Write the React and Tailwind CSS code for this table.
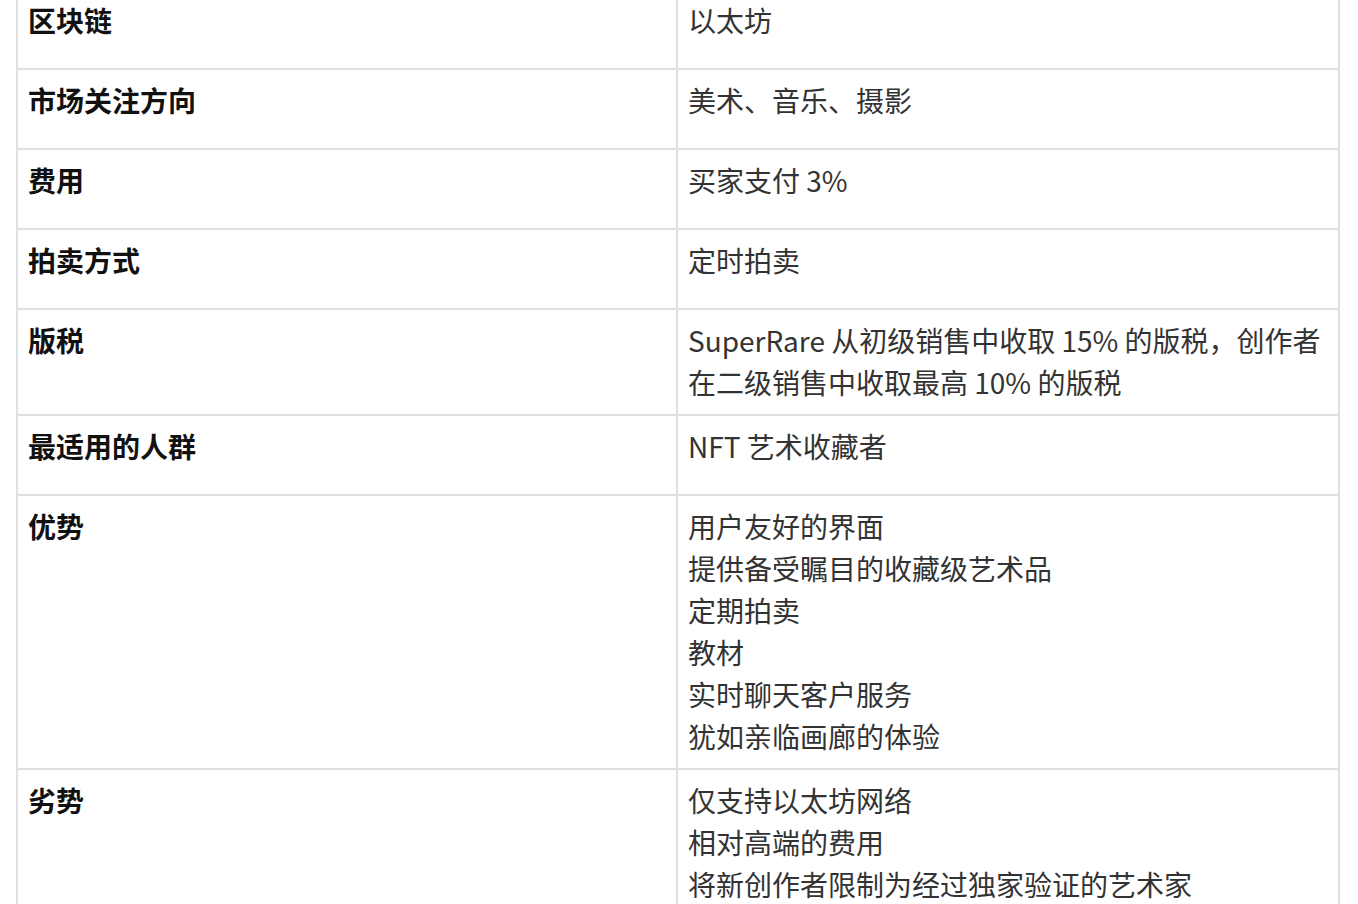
import React from "react";

const rows = [
  { k: "区块链", v: ["以太坊"] },
  { k: "市场关注方向", v: ["美术、音乐、摄影"] },
  { k: "费用", v: ["买家支付 3%"] },
  { k: "拍卖方式", v: ["定时拍卖"] },
  { k: "版税", v: ["SuperRare 从初级销售中收取 15% 的版税，创作者", "在二级销售中收取最高 10% 的版税"] },
  { k: "最适用的人群", v: ["NFT 艺术收藏者"] },
  {
    k: "优势",
    v: ["用户友好的界面", "提供备受瞩目的收藏级艺术品", "定期拍卖", "教材", "实时聊天客户服务", "犹如亲临画廊的体验"],
  },
  { k: "劣势", v: ["仅支持以太坊网络", "相对高端的费用", "将新创作者限制为经过独家验证的艺术家"] },
];

export default function App() {
  return (
    <div
      className="w-[1358px] h-[904px] overflow-hidden bg-white"
      style={{ fontFamily: '"Noto Sans CJK SC", "Noto Sans", sans-serif' }}
    >
      <div className="-mt-[12px] ml-[16px] w-[1324px] border-x-2 border-t-2 border-[#e0e0e0]">
        {rows.map((r) => (
          <div key={r.k} className="grid grid-cols-[660px_1fr] border-b-2 border-[#e0e0e0]">
            <div className="border-r-2 border-[#e0e0e0] min-h-[78px] pl-[10px] pr-[11px] pt-[9px] pb-[11px] text-[28px] leading-[42px] font-bold text-[#111]">
              {r.k}
            </div>
            <div className="min-h-[78px] pl-[10px] pr-[4px] pt-[9px] pb-[11px] text-[28px] leading-[42px] text-[#333]">
              {r.v.map((line, i) => (
                <div key={i} className="whitespace-nowrap">
                  {line}
                </div>
              ))}
            </div>
          </div>
        ))}
      </div>
    </div>
  );
}
